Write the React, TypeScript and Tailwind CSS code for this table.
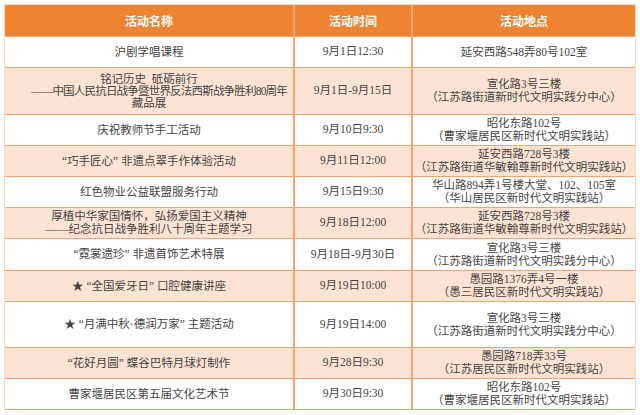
import React from "react";

type Row = { name: string[]; time: string; place: string[]; h: number; bg: boolean };

const rows: Row[] = [
  { name: ["沪剧学唱课程"], time: "9月1日12:30", place: ["延安西路548弄80号102室"], h: 31, bg: false },
  {
    name: ["铭记历史  砥砺前行", "——中国人民抗日战争暨世界反法西斯战争胜利80周年", "藏品展"],
    time: "9月1日-9月15日",
    place: ["宣化路3号三楼", "（江苏路街道新时代文明实践分中心）"],
    h: 47,
    bg: true,
  },
  { name: ["庆祝教师节手工活动"], time: "9月10日9:30", place: ["昭化东路102号", "（曹家堰居民区新时代文明实践站）"], h: 31, bg: false },
  { name: ["“巧手匠心” 非遗点翠手作体验活动"], time: "9月11日12:00", place: ["延安西路728号3楼", "（江苏路街道华敏翰尊新时代文明实践站）"], h: 31, bg: true },
  { name: ["红色物业公益联盟服务行动"], time: "9月15日9:30", place: ["华山路894弄1号楼大堂、102、105室", "（华山居民区新时代文明实践站）"], h: 31, bg: false },
  {
    name: ["厚植中华家国情怀，弘扬爱国主义精神", "——纪念抗日战争胜利八十周年主题学习"],
    time: "9月18日12:00",
    place: ["延安西路728号3楼", "（江苏路街道华敏翰尊新时代文明实践站）"],
    h: 31,
    bg: true,
  },
  { name: ["“霓裳遗珍” 非遗首饰艺术特展"], time: "9月18日-9月30日", place: ["宣化路3号三楼", "（江苏路街道新时代文明实践分中心）"], h: 32, bg: false },
  { name: ["★ “全国爱牙日” 口腔健康讲座"], time: "9月19日10:00", place: ["愚园路1376弄4号一楼", "（愚三居民区新时代文明实践站）"], h: 31, bg: true },
  { name: ["★ “月满中秋·德润万家” 主题活动"], time: "9月19日14:00", place: ["宣化路3号三楼", "（江苏路街道新时代文明实践分中心）"], h: 46, bg: false },
  { name: ["“花好月圆” 蝶谷巴特月球灯制作"], time: "9月28日9:30", place: ["愚园路718弄33号", "（江苏居民区新时代文明实践站）"], h: 31, bg: true },
  { name: ["曹家堰居民区第五届文化艺术节"], time: "9月30日9:30", place: ["昭化东路102号", "（曹家堰居民区新时代文明实践站）"], h: 32, bg: false },
];

function Lines({ lines, tight }: { lines: string[]; tight?: boolean }) {
  return (
    <div className={`flex flex-col items-center ${tight ? "leading-[12px]" : "leading-[13px]"}`}>
      {lines.map((l, i) => (
        <div key={i} className={`whitespace-pre ${l.length > 22 ? "tracking-[-0.8px] ml-[20px]" : ""}`}>
          {l}
        </div>
      ))}
    </div>
  );
}

export default function App() {
  return (
    <div
      className="w-[640px] h-[415px] bg-white pt-[4px] pl-[4px] text-[11.5px] text-[#444444]"
      style={{ fontFamily: '"Liberation Serif", "Noto Sans CJK SC", sans-serif' }}
    >
      <div className="w-[632px] border border-[#fbd9c2] border-b-0">
        <div
          className="grid grid-cols-[290px_118px_222px] h-[31px] bg-[#ee8432] text-white font-bold text-[12px]"
          style={{ fontFamily: '"Noto Sans CJK SC", sans-serif' }}
        >
          <div className="flex items-center justify-center border-r-2 border-[#f6a56c]">活动名称</div>
          <div className="flex items-center justify-center border-r-2 border-[#f6a56c]">活动时间</div>
          <div className="flex items-center justify-center">活动地点</div>
        </div>
        {rows.map((r, i) => (
          <div
            key={i}
            className={`grid grid-cols-[290px_118px_222px] border-t border-[#f3a36c] ${r.bg ? "bg-[#fce3d3]" : "bg-white"} ${i === rows.length - 1 ? "border-b" : ""}`}
            style={{ height: r.h }}
          >
            <div className="flex items-center justify-center border-r-2 border-[#f6a56c]">
              <Lines lines={r.name} tight={r.name.length > 2} />
            </div>
            <div className="flex items-center justify-center border-r-2 border-[#f6a56c]">{r.time}</div>
            <div className="flex items-center justify-center">
              <Lines lines={r.place} />
            </div>
          </div>
        ))}
      </div>
    </div>
  );
}
